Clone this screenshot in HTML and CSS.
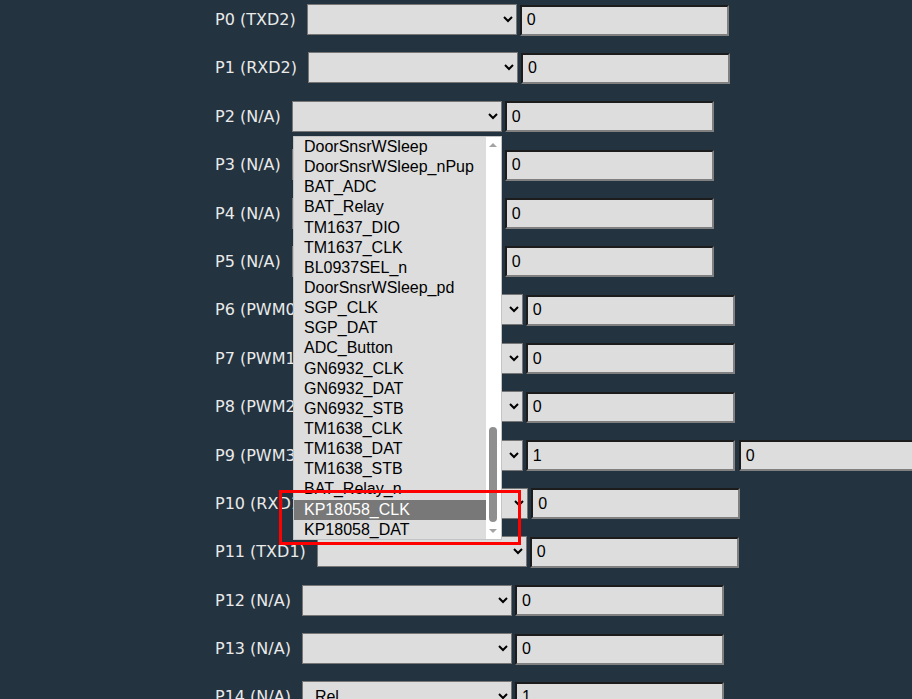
FILE: index.html
```html
<!DOCTYPE html>
<html>
<head>
<meta charset="utf-8">
<link rel="stylesheet" href="styles.css">
</head>
<body>
<div class="pins">
  <div class="row"><span class="lbl">P0 (TXD2)</span><select class="sel"><option></option></select><input class="val" value="0"></div>
  <div class="row"><span class="lbl">P1 (RXD2)</span><select class="sel"><option></option></select><input class="val" value="0"></div>
  <div class="row"><span class="lbl">P2 (N/A)</span><select class="sel"><option></option></select><input class="val" value="0"></div>
  <div class="row"><span class="lbl">P3 (N/A)</span><select class="sel"><option></option></select><input class="val" value="0"></div>
  <div class="row"><span class="lbl">P4 (N/A)</span><select class="sel"><option></option></select><input class="val" value="0"></div>
  <div class="row"><span class="lbl">P5 (N/A)</span><select class="sel"><option></option></select><input class="val" value="0"></div>
  <div class="row"><span class="lbl">P6 (PWM0)</span><select class="sel"><option></option></select><input class="val" value="0"></div>
  <div class="row"><span class="lbl">P7 (PWM1)</span><select class="sel"><option></option></select><input class="val" value="0"></div>
  <div class="row"><span class="lbl">P8 (PWM2)</span><select class="sel"><option></option></select><input class="val" value="0"></div>
  <div class="row"><span class="lbl">P9 (PWM3)</span><select class="sel"><option></option></select><input class="val" value="1"><input class="val" value="0"></div>
  <div class="row"><span class="lbl">P10 (RXD1)</span><select class="sel"><option></option></select><input class="val" value="0"></div>
  <div class="row"><span class="lbl">P11 (TXD1)</span><select class="sel"><option></option></select><input class="val" value="0"></div>
  <div class="row"><span class="lbl">P12 (N/A)</span><select class="sel"><option></option></select><input class="val" value="0"></div>
  <div class="row"><span class="lbl">P13 (N/A)</span><select class="sel"><option></option></select><input class="val" value="0"></div>
  <div class="row"><span class="lbl">P14 (N/A)</span><select class="sel"><option>Rel</option></select><input class="val" value="1"></div>
  <div class="row"><span class="lbl">P15 (N/A)</span><select class="sel"><option></option></select><input class="val" value="0"></div>
</div>

<div class="popup">
  <div class="opts">
    <div class="opt">DoorSnsrWSleep</div>
    <div class="opt">DoorSnsrWSleep_nPup</div>
    <div class="opt">BAT_ADC</div>
    <div class="opt">BAT_Relay</div>
    <div class="opt">TM1637_DIO</div>
    <div class="opt">TM1637_CLK</div>
    <div class="opt">BL0937SEL_n</div>
    <div class="opt">DoorSnsrWSleep_pd</div>
    <div class="opt">SGP_CLK</div>
    <div class="opt">SGP_DAT</div>
    <div class="opt">ADC_Button</div>
    <div class="opt">GN6932_CLK</div>
    <div class="opt">GN6932_DAT</div>
    <div class="opt">GN6932_STB</div>
    <div class="opt">TM1638_CLK</div>
    <div class="opt">TM1638_DAT</div>
    <div class="opt">TM1638_STB</div>
    <div class="opt">BAT_Relay_n</div>
    <div class="opt opt-active">KP18058_CLK</div>
    <div class="opt">KP18058_DAT</div>
  </div>
  <div class="track">
    <div class="arrow arrow-up"></div>
    <div class="thumb"></div>
    <div class="arrow arrow-down"></div>
  </div>
</div>

<div class="mark"></div>
</body>
</html>
```

FILE: styles.css
```css
html, body {
  margin: 0;
  padding: 0;
  background: #233340;
  overflow: hidden;
}

.pins {
  padding-left: 215px;
  padding-top: 4px;
}

.row {
  display: flex;
  align-items: center;
  height: 31px;
  margin-bottom: 17.4px;
  white-space: nowrap;
}

.lbl {
  font-family: "DejaVu Sans", Verdana, sans-serif;
  font-size: 16px;
  color: #eaeaea;
  margin-right: 11px;
  flex-shrink: 0;
}

.sel {
  flex-shrink: 0;
  box-sizing: border-box;
  width: 210px;
  height: 31px;
  margin: 0 3px 0 0;
  padding: 0 0 0 8px;
  background-color: #dddddd;
  border: 1px solid #767676;
  border-radius: 0;
  font-family: "Liberation Sans", Arial, sans-serif;
  font-size: 16px;
  color: #000;
}

.val {
  flex-shrink: 0;
  box-sizing: border-box;
  width: 209px;
  height: 31px;
  margin: 1px 4px 0 0;
  padding: 0 5px;
  background: #dddddd;
  border-style: solid;
  border-width: 2px;
  border-color: #1c1c1c #808080 #808080 #1c1c1c;
  font-family: "Liberation Sans", Arial, sans-serif;
  font-size: 16px;
  color: #000;
}

.popup {
  position: absolute;
  left: 293px;
  top: 136px;
  width: 209px;
  height: 404px;
  box-sizing: border-box;
  border: 1px solid #c4c4c4;
  background: #dddddd;
  display: flex;
}

.opts {
  flex: 1;
}

.opt {
  height: 20.15px;
  line-height: 20.15px;
  padding-left: 10px;
  font-family: "Liberation Sans", Arial, sans-serif;
  font-size: 16px;
  color: #000;
  white-space: nowrap;
}

.opt-active {
  background: #787878;
  color: #fff;
}

.track {
  width: 15px;
  background: #ffffff;
  position: relative;
}

.arrow {
  position: absolute;
  left: 3px;
  width: 0;
  height: 0;
  border-left: 4px solid transparent;
  border-right: 4px solid transparent;
}

.arrow-up {
  top: 6px;
  border-bottom: 4px solid #a3a3a3;
}

.arrow-down {
  bottom: 6px;
  border-top: 4px solid #a3a3a3;
}

.thumb {
  position: absolute;
  left: 3px;
  width: 8px;
  top: 290px;
  height: 95px;
  border-radius: 4px;
  background: #8f8f8f;
}

.mark {
  position: absolute;
  left: 279px;
  top: 490px;
  width: 242px;
  height: 55px;
  box-sizing: border-box;
  border: 3px solid #ff0000;
}
```
